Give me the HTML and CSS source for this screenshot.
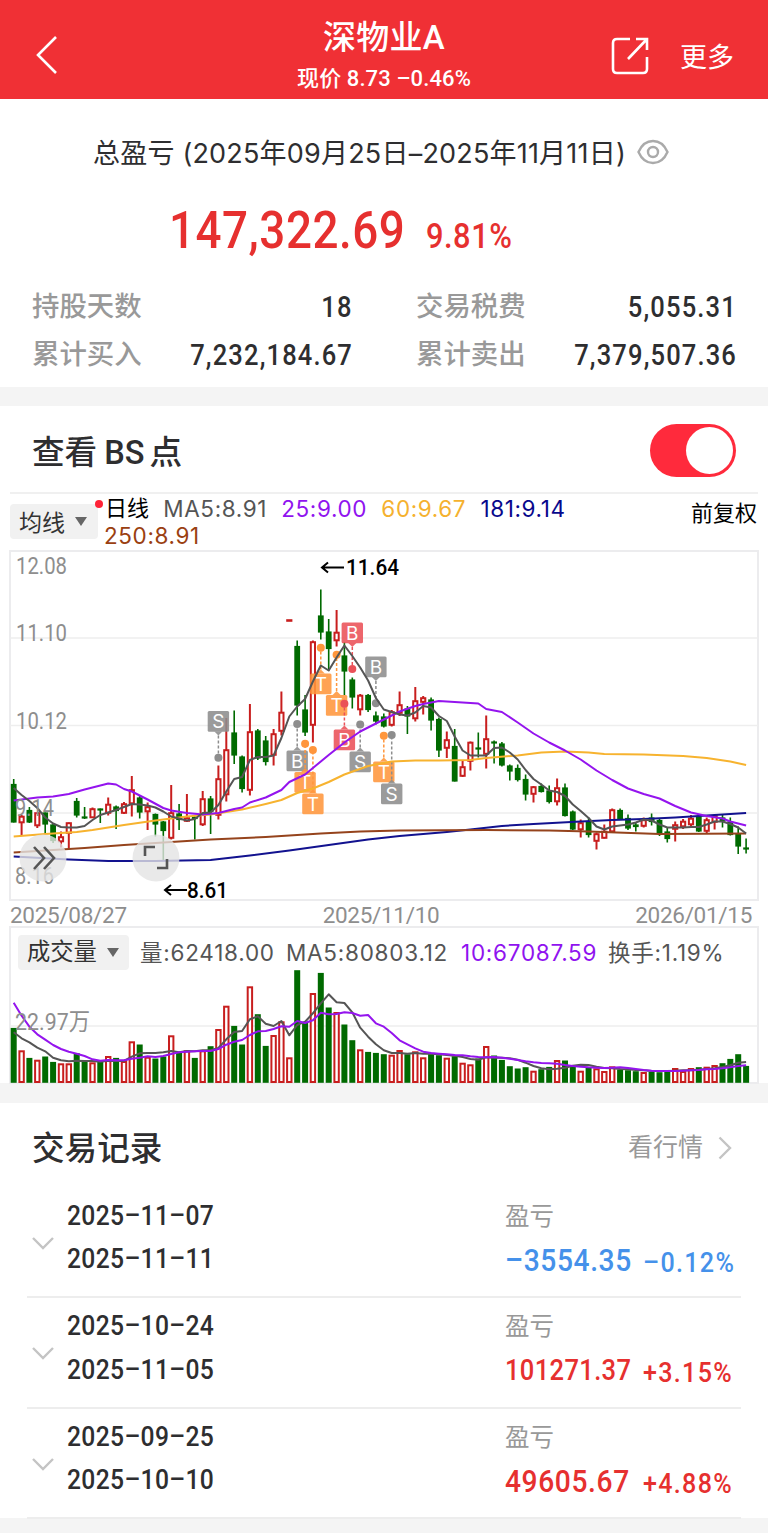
FILE: index.html
```html
<!DOCTYPE html>
<html lang="zh-CN">
<head>
  <meta charset="UTF-8" />
  <meta name="viewport" content="width=device-width, initial-scale=1" />
  <title>深物业A</title>
  <link rel="stylesheet" href="styles.css">
</head>
<body>

  <header class="topbar">
    <svg class="back" width="22" height="40" viewBox="0 0 22 40"><path d="M20 2 L2 20 L20 38" /></svg>
    <div class="topbar-title">
      <h1>深物业A</h1>
      <p>现价 8.73 –0.46%</p>
    </div>
    <div class="topbar-actions">
      <svg width="38" height="38" viewBox="0 0 38 38">
        <path d="M19 2 H6 Q2 2 2 6 V32 Q2 36 6 36 H32 Q36 36 36 32 V20" />
        <path d="M25 2 H36 V13 M36 2 L17 22" />
      </svg>
      <span>更多</span>
    </div>
  </header>

  <section class="summary">
    <div class="period">
      <span>总盈亏 (2025年09月25日–2025年11月11日)</span>
      <svg width="32" height="26" viewBox="0 0 32 26">
        <path d="M1.5 13 C5 5 10 2 16 2 S27 5 30.5 13 C27 21 22 24 16 24 S5 21 1.5 13 Z" />
        <circle cx="16" cy="13" r="5" />
      </svg>
    </div>
    <div class="total">
      <span class="total-amount">147,322.69</span>
      <span class="total-rate">9.81%</span>
    </div>
    <dl class="stats">
      <div><dt>持股天数</dt><dd>18</dd></div>
      <div><dt>交易税费</dt><dd>5,055.31</dd></div>
      <div><dt>累计买入</dt><dd>7,232,184.67</dd></div>
      <div><dt>累计卖出</dt><dd>7,379,507.36</dd></div>
    </dl>
  </section>

  <section class="chart-card">
    <div class="bs-row">
      <h2>查看<span>BS</span>点</h2>
      <div class="switch"></div>
    </div>

    <div class="legend">
      <div class="picker ma-picker">均线<i></i></div>
      <div class="legend-items">
        <b>日线</b>
        <span class="c-ma5">MA5:8.91</span>
        <span class="c-ma25">25:9.00</span>
        <span class="c-ma60">60:9.67</span>
        <span class="c-ma181">181:9.14</span>
        <span class="c-ma250">250:8.91</span>
      </div>
      <span class="adjust">前复权</span>
    </div>

    <svg id="kline" class="chart" width="768" height="351" viewBox="0 0 768 351"></svg>

    <div class="dates">
      <span>2025/08/27</span>
      <span>2025/11/10</span>
      <span>2026/01/15</span>
    </div>

    <div class="volume">
      <div class="volume-legend">
        <div class="picker">成交量<i></i></div>
        <span class="v1">量:62418.00</span>
        <span class="v2">MA5:80803.12</span>
        <span class="v3 c-ma25">10:67087.59</span>
        <span class="v4">换手:1.19%</span>
      </div>
      <svg id="volume" class="chart" width="768" height="157" viewBox="0 0 768 157"></svg>
    </div>
  </section>

  <section class="records">
    <div class="records-head">
      <h2>交易记录</h2>
      <div class="more">看行情
        <svg width="14" height="24" viewBox="0 0 14 24"><path d="M1.5 1.5 L12 12 L1.5 22.5" /></svg>
      </div>
    </div>
    <div class="record">
      <svg class="fold" width="22" height="13" viewBox="0 0 22 13"><path d="M1 1 L11 11 L21 1" /></svg>
      <div class="range">2025–11–07<br>2025–11–11</div>
      <div class="profit down">
        <label>盈亏</label>
        <div><strong>–3554.35</strong><em>–0.12%</em></div>
      </div>
    </div>
    <div class="record">
      <svg class="fold" width="22" height="13" viewBox="0 0 22 13"><path d="M1 1 L11 11 L21 1" /></svg>
      <div class="range">2025–10–24<br>2025–11–05</div>
      <div class="profit">
        <label>盈亏</label>
        <div><strong class="long">101271.37</strong><em>+3.15%</em></div>
      </div>
    </div>
    <div class="record">
      <svg class="fold" width="22" height="13" viewBox="0 0 22 13"><path d="M1 1 L11 11 L21 1" /></svg>
      <div class="range">2025–09–25<br>2025–10–10</div>
      <div class="profit">
        <label>盈亏</label>
        <div><strong>49605.67</strong><em>+4.88%</em></div>
      </div>
    </div>
  </section>

  <script src="chart.js"></script>
</body>
</html>
```
FILE: styles.css
```css
* {
  box-sizing: border-box;
}
body {
  margin: 0;
  width: 768px;
  height: 1533px;
  overflow: hidden;
  background: #f4f4f4;
  color: #2e2e30;
  font-family: Roboto, "Noto Sans CJK SC", sans-serif;
}
h1, h2, p, dl, dd {
  margin: 0;
  font-weight: 500;
}
svg {
  display: block;
  fill: none;
}

/* 1. Top bar */
.topbar {
  height: 99px;
  background: #f03035;
  color: #fff;
  display: grid;
  grid-template-columns: 200px 1fr 200px;
  padding: 0 34px 0 36px;
}
.topbar svg {
  stroke: #fff;
  stroke-width: 2.6;
}
.topbar .back {
  margin-top: 35px;
}
.topbar-title {
  text-align: center;
  padding-top: 16px;
  margin-left: -2px;
}
.topbar-title h1 {
  font-size: 33px;
  line-height: 44px;
  letter-spacing: 0.3px;
}
.topbar-title p {
  font-size: 22px;
  line-height: 37px;
  letter-spacing: 0.1px;
  white-space: nowrap;
}
.topbar-actions {
  display: flex;
  justify-content: flex-end;
  align-items: center;
  gap: 31px;
  padding-top: 12px;
  font-size: 27px;
}

/* 2. Summary */
.summary {
  height: 288px;
  background: #fff;
  padding: 31px 33px 0 32px;
}
.period {
  height: 44px;
  padding-left: 61px;
  display: flex;
  align-items: center;
  gap: 11px;
  font-family: Inter, "Noto Sans CJK SC", sans-serif;
  font-size: 27px;
  letter-spacing: 0.2px;
  line-height: 40px;
  white-space: nowrap;
}
.period span {
  margin-top: 3px;
}
.period svg {
  stroke: #aaa;
  stroke-width: 2.4;
}
.total {
  height: 110px;
  display: flex;
  align-items: baseline;
  padding: 27px 0 0 137px;
  color: #e6302f;
  font-weight: 500;
}
/* condensed figures */
.total-amount, .total-rate, .stats dd, .range, .profit strong, .profit em {
  transform: scaleX(0.88);
  transform-origin: left center;
}
.total-amount {
  width: 257px;
  font-size: 52px;
  line-height: 60px;
  letter-spacing: 0.6px;
}
.total-rate {
  font-size: 35px;
  letter-spacing: 0.6px;
}
.stats {
  display: grid;
  grid-template-columns: 320px 320px;
  grid-auto-rows: 47.5px;
  column-gap: 64px;
}
.stats div {
  display: flex;
  justify-content: space-between;
  line-height: 46px;
}
.stats dt {
  color: #999;
  font-size: 27.4px;
}
.stats dd {
  font-size: 29px;
  letter-spacing: 1.3px;
  margin-right: -1px;
  transform-origin: right center;
}

/* 3. Chart card */
.chart-card {
  height: 677px;
  margin-top: 19px;
  background: #fff;
}
.bs-row {
  height: 88px;
  margin: 0 10px;
  padding: 3px 22px 0;
  display: flex;
  align-items: center;
  justify-content: space-between;
  border-bottom: 2px solid #f0f0f0;
}
.bs-row h2, .records h2 {
  font-size: 32.6px;
}
.bs-row h2 {
  margin-top: -3px;
}
.bs-row h2 span {
  margin: 0 5px 0 7px;
}
.switch {
  width: 86px;
  height: 53px;
  border-radius: 27px;
  background: #ff2a3c;
  padding: 3px;
}
.switch::after {
  content: "";
  display: block;
  width: 47px;
  height: 47px;
  margin-left: auto;
  border-radius: 50%;
  background: #fff;
}
.legend {
  height: 56px;
  display: flex;
  padding-left: 10px;
  font-family: Inter, "Noto Sans CJK SC", sans-serif;
  font-size: 22.5px;
}
.picker {
  display: flex;
  align-items: center;
  gap: 10px;
  height: 35px;
  padding: 0 9px 1px;
  border-radius: 4px;
  background: #f1f1f1;
  color: #333;
  font-size: 23px;
  letter-spacing: 0;
}
.picker i {
  border: 6.5px solid transparent;
  border-top: 9px solid #666;
  border-bottom: 0;
}
.ma-picker {
  position: relative;
  width: 88px;
  margin-top: 10px;
}
.ma-picker::after {
  content: "";
  position: absolute;
  top: -4px;
  right: -5px;
  width: 8px;
  height: 8px;
  border-radius: 50%;
  background: #ff2337;
}
.legend-items {
  width: 593px;
  padding: 1px 0 0 7px;
  display: flex;
  flex-wrap: wrap;
  align-content: flex-start;
  column-gap: 14.3px;
  line-height: 27px;
  letter-spacing: 0.6px;
}
.legend-items .c-ma250 {
  width: 100%;
  margin-left: -1px;
}
.legend b, .adjust {
  color: #000;
  font-size: 22px;
  font-weight: 400;
  letter-spacing: 0;
}
.adjust {
  line-height: 38px;
}
.c-ma5 { color: #555; }
.c-ma25 { color: #9013ef; }
.c-ma60 { color: #f5b12e; }
.c-ma181 { color: #08088c; }
.c-ma250 { color: #9a4011; }
.dates {
  display: flex;
  justify-content: space-between;
  height: 25px;
  padding: 0 16px 0 10px;
  color: #8e8e8e;
  font-size: 22.5px;
  line-height: 29px;
  letter-spacing: -0.3px;
}
.volume {
  position: relative;
}
.volume-legend {
  position: absolute;
  top: 9px;
  left: 18px;
  display: flex;
  font-family: Inter, "Noto Sans CJK SC", sans-serif;
  font-size: 22.5px;
  line-height: 36px;
  letter-spacing: 0.75px;
  color: #555;
  white-space: nowrap;
}
.volume-legend .picker { width: 111px; font-size: 23.3px; }
.v1 { width: 146px; margin-left: 11px; }
.v2 { width: 175px; }
.v3 { width: 147px; }

/* chart marks */
.chart { overflow: visible; }
.box { stroke: #ececee; stroke-width: 2; }
.grid { stroke: #eee; stroke-width: 1.5; }
.axis { fill: #8e8e8e; font-size: 24px; }
.peak { fill: #000; font-size: 22.5px; font-weight: 500; }
.arrow { stroke: #000; stroke-width: 2; }
.line { stroke-width: 2; stroke-linejoin: round; }
.up { fill: #fff; stroke: #c81e1e; stroke-width: 2; }
.fall { fill: #006a00; stroke: #006a00; stroke-width: 1.6; }
.tag text {
  fill: #fff;
  font-family: Inter, sans-serif;
  font-size: 19px;
  text-anchor: middle;
}
.tag line { stroke-width: 1.5; stroke-dasharray: 3 2; }
.grey { fill: #8d8d8d; stroke: #8d8d8d; }
.orange { fill: #ff963c; stroke: #ff963c; }
.red { fill: #ea5158; stroke: #ea5158; }
.tag rect, .tag polygon { stroke: none; fill-opacity: 0.88; }
.tag circle, .tag text { stroke: none; }
.float circle { fill: #e4e4e4; fill-opacity: 0.8; }
.float path { stroke: #555; stroke-width: 2.6; }

/* 4. Records */
.records {
  height: 415px;
  margin-top: 20px;
  padding: 0 27px;
  background: #fff;
}
.records-head {
  height: 85px;
  padding: 2px 9px 0 5px;
  display: flex;
  align-items: center;
  justify-content: space-between;
}
.records-head h2 {
  margin-top: -2px;
}
.more {
  display: flex;
  align-items: center;
  gap: 15px;
  color: #999;
  font-size: 25px;
  line-height: 36px;
  margin-top: 2px;
}
.more svg, .fold {
  stroke: #c4c4c4;
  stroke-width: 2.4;
}
.record {
  display: grid;
  grid-template-columns: 35px 438px 236px;
  align-content: start;
  height: 110.3px;
  padding: 6px 0 0 5px;
  border-bottom: 2px solid #ededed;
}
.fold {
  margin-top: 43px;
}
.range {
  font-size: 28px;
  font-weight: 500;
  line-height: 43.4px;
  letter-spacing: 0.4px;
}
.profit {
  color: #e6302f;
  white-space: nowrap;
}
.profit.down {
  color: #4591ea;
}
.profit label {
  display: block;
  color: #999;
  font-size: 24.5px;
  line-height: 45px;
}
.profit div {
  display: flex;
  align-items: center;
  line-height: 39px;
}
.profit strong {
  flex: none;
  width: 138px;
  font-size: 32px;
  font-weight: 500;
  letter-spacing: 0.7px;
}
.profit .long {
  font-size: 29px;
  letter-spacing: 0.4px;
}
.profit em {
  font-style: normal;
  font-size: 28.5px;
  font-weight: 500;
  letter-spacing: 1.5px;
  padding-top: 4px;
}
```
FILE: chart.js
```js
const STEP = 7.875;
const X0 = 13.7;
const x = i => +(X0 + STEP * i).toFixed(1);

// g = falling, r = rising; high, body top, body bottom, low
const candles = `
g 229 234 272.5 272.5|r 265 266 273 285|g 257 260 272.5 273|r 262.5 262.5 276 278|g 262.5 262.5 274.5 284
g 274 274.5 291 293|r 281.5 286.5 292 297.5|r 272.5 272.5 283.5 298.5|g 248 251 265.5 267.5|g 257 266.5 268.5 269
r 257.5 258.5 268 268|g 258.5 258.5 260.5 273|r 247.5 254 263.5 265.5|g 255.5 256.5 261 279|r 252 253.5 263.5 264
r 226 239.5 254 266.5|g 245.5 247.5 262.5 268.5|r 252.5 256.5 262 280|g 263.5 264 274.5 286.5|g 271 271.5 281 310
r 235 262.5 288.5 289.5|g 254 263.5 270 280|r 244 267.5 271.5 272|g 266 267 269 289.5|r 241 248.5 275 276
g 246 248.5 262 284|r 215.5 228.5 265.5 269.5|r 168 199.5 245 251.5|g 160.5 182.5 205.5 214|g 205.5 206.5 239 242.5
r 154 181.5 240.5 245.5|g 179 180.5 208.5 210|g 186 190.5 212 215.5|r 179 183.5 205.5 215.5|r 141.5 162 181.5 185.5
r 70 69.5 70.5 70|g 90.5 96 155.5 165.5|g 145 159.5 182.5 186|r 90.5 91.5 175.5 192.5|g 39.5 65.5 82.5 89.5
g 69 81.5 99 120.5|r 60 82 91 96.5|g 92 105.5 121.5 145|g 127.5 129.5 147.5 158.5|r 144 145 160 165.5
g 144 145 160 162|g 161.5 165.5 171.5 174.5|g 163.5 166.5 176.5 177.5|r 160 161.5 175.5 176.5|r 141.5 154.5 163.5 166
g 156 158.5 166.5 184|r 137 150.5 169 171.5|r 146 147.5 152.5 164.5|g 147.5 149.5 170.5 180.5|g 167.5 169 200.5 207
r 181.5 189.5 198.5 208|g 179 196 231.5 231.5|r 210 216.5 226.5 227|r 191.5 192 211.5 220.5|g 182.5 197.5 199.5 207.5
r 165.5 188.5 204.5 218.5|g 190.5 191.5 193.5 213.5|g 192 193.5 215.5 216.5|g 214.5 215.5 221.5 230.5|g 214.5 218 230 231.5
g 224.5 229 244.5 250.5|r 236 236.5 244.5 252.5|g 233.5 236 242 242.5|g 235.5 240.5 252 253.5|r 228.5 237.5 252 255.5
g 233.5 237.5 266 266.5|g 260.5 261.5 279.5 280|r 269.5 272.5 280 287.5|g 267.5 272 285 287.5|r 282.5 283.5 291.5 299.5
r 274.5 281 288.5 288.5|r 258.5 259.5 282 282.5|g 258.5 260 269.5 270|g 264.5 268 278.5 280|g 272.5 274.5 277 281.5
r 267.5 269.5 276.5 277.5|g 263.5 267.5 272 275.5|g 268.5 270 284 286|g 277.5 281.5 289 292.5|r 271.5 274.5 279.5 291.5
r 269 271 277 279|r 265 268 275 276|g 265.5 266.5 281.5 282|r 267.5 269.5 281.5 284|r 264.5 265.5 272.5 279.5
g 264.5 267.5 271.5 277.5|g 267.5 271.5 285 285.5|g 276.5 283.5 296.5 304|g 288.5 297.5 299.5 303.5
`.trim().split(/[|\n]/).map(s => s.split(' ')).map(([t, ...v]) => [t, ...v.map(Number)]);

const ma5 = [238,245,251,258,267.5,273.5,277,277.5,277.5,276,270,265,262.5,260,257,254,254.5,255.5,257.5,261.5,266.5,268.5,270.5,269,263,262.5,255,241.5,229,227,210,207,207,205.5,188,166.5,156.5,149,131.5,115.5,120.5,107.5,95.5,106,117.5,130.5,148,159.5,162,164.5,165.5,162.5,156,157.5,166,171,186.5,200.5,205.5,205.5,205.5,198,197.5,202.5,209.5,220,229,234.5,240.5,242,246,254.5,261,268,276.5,279.5,276.5,275.5,274.5,272.5,269.5,270.5,274.5,277.5,277.5,277.5,277,277,274.5,271.5,271.5,274,277.5,283.5];

// sparse lines: [index, y]
const ma25 = [[0,250.5],[1,249.5],[3,247.5],[5,246.5],[7,244],[9,239.5],[12,233.5],[13,234.5],[14,239],[15,241.5],[17,249.5],[19,258],[20,260.5],[22,263],[24,264.5],[26,263],[28,259],[29,257.5],[30,252.5],[32,247.5],[34,240],[35,232],[37,224.5],[38,218],[40,205],[42,192.5],[44,181.5],[46,173.5],[48,165.5],[49,161.5],[51,156],[52,154],[54,151],[57,152.5],[59,153.5],[60,159],[62,162],[64,172.5],[66,183.5],[68,192.5],[70,200.5],[72,209.5],[74,220.5],[76,230],[78,238.5],[80,244],[82,248.5],[84,256],[86,262.5],[88,266],[90,268.5],[91,271.5],[93,275.5]];
const ma60 = [[0,286.5],[4,284],[8,282],[10,280],[14,275],[18,270.5],[22,266.5],[25,264.5],[29,259.5],[32,254],[34,250],[36,243],[38,238.5],[40,232],[42,224.5],[45,216],[48,211.5],[51,210.5],[54,210.5],[58,210],[60,208],[64,205.5],[67,202.5],[70,201.5],[73,202.5],[75,204],[80,204.5],[85,206],[88,208],[91,211.5],[93,215]];
const ma181 = [[0,306.5],[7,309.5],[12,311],[18,311],[25,310],[30,305.5],[35,300.5],[40,295],[45,289.5],[49,286],[55,282],[58,279.5],[62,276],[66,274],[72,271.5],[76,270],[80,269],[84,267.5],[88,265.5],[93,263]];
const ma250 = [[0,302.5],[5,300],[9,298],[14,295],[20,292],[25,289.5],[32,287],[39,283.5],[44,281.5],[49,280.5],[60,280],[68,280.5],[73,281.5],[82,284],[93,283.5]];

// trade tags: letter, colour, candle index, top of box, dot y
const tags = [
  ['S', 'grey', 26, 161, 207.7], ['B', 'grey', 36, 200.5, 174],
  ['T', 'orange', 37, 222, 193.7], ['T', 'orange', 38, 243.5, 200],
  ['T', 'orange', 39, 123.5, 97.7], ['T', 'orange', 41, 145, 104.7],
  ['B', 'red', 43, 72.5, 119], ['B', 'red', 42, 179.5, 153.7],
  ['S', 'grey', 44, 201.5, 174.5], ['B', 'grey', 46, 106.5, 153.3],
  ['T', 'orange', 47, 211.5, 185.7], ['S', 'grey', 48, 233.5, 185]
];

const line = (pts, color) =>
  `<polyline class="line" style="stroke:${color}" points="${pts.map(p => x(p[0]) + ',' + p[1]).join(' ')}"/>`;

const frame = (h, rows) => `<rect class="box" x="10" y="1" width="748" height="${h}"/>` +
  rows.map(y => `<line class="grid" x1="10" x2="758" y1="${y}" y2="${y}"/>`).join('');

const label = (cls, s, y, left, w) =>
  `<text class="${cls}" x="${left}" y="${y}" textLength="${w}" lengthAdjust="spacingAndGlyphs">${s}</text>`;

function candle([type, hi, top, bottom, lo], i) {
  const cls = type === 'r' ? 'up' : 'fall';
  const cx = x(i);
  return `<line class="${cls}" x1="${cx}" x2="${cx}" y1="${hi}" y2="${lo}"/>` +
    `<rect class="${cls}" x="${cx - 2.1}" y="${top + 0.7}" width="4.2" height="${Math.max(bottom - top - 1.4, 0.6)}"/>`;
}

function tag([letter, color, i, top, dot]) {
  const cx = x(i);
  const down = dot > top;
  const edge = down ? top + 20.5 : top;
  const tip = down ? edge + 4 : edge - 4;
  return `<g class="tag ${color}"><line x1="${cx}" x2="${cx}" y1="${tip}" y2="${dot}"/>
    <circle cx="${cx}" cy="${dot}" r="4"/>
    <rect x="${cx - 10.7}" y="${top}" width="21.4" height="20.8" rx="1.5"/>
    <polygon points="${cx - 4},${edge} ${cx + 4},${edge} ${cx},${tip}"/>
    <text x="${cx}" y="${top + 17.3}">${letter}</text></g>`;
}

document.getElementById('kline').innerHTML =
  frame(349, [88, 175.5, 263]) +
  candles.map(candle).join('') +
  line(ma181, '#12128f') + line(ma250, '#95431c') +
  tags.map(tag).join('') +
  line(ma60, '#f7b32f') + line(ma25, '#9414ee') +
  line(ma5.map((y, i) => [i, y]), '#555') +
  label('axis', '12.08', 23.5, 16, 51) + label('axis', '11.10', 91, 16, 51) + label('axis', '10.12', 178.5, 16, 51) +
  label('axis', '9.14', 266, 15, 39) + label('axis', '8.16', 334, 15, 39) +
  `<path class="arrow" d="M328 12.5 L322 17.5 L328 22.5 M322 17.5 H344"/>
   <path class="arrow" d="M171 335 L165 340 L171 345 M165 340 H187"/>` +
  label('peak', '11.64', 25, 346, 53) + label('peak', '8.61', 347.5, 187, 41) +
  `<g class="float"><circle cx="43" cy="308" r="23.5"/><circle cx="156" cy="308" r="23.5"/>
   <path d="M34 297 L44 308 L34 319 M44 297 L54 308 L44 319"/>
   <path d="M145 306 V297 H155 M167 309 V318 H157"/></g>`;

// volume: type + distance of the bar top from the chart top, in thirds of a pixel
const volumes = 'g308 r376 g398 r404 g394 g410 r415 r415 g384 g408 r412 g408 r393 g398 r408 r349 g358 r395 g400 g394 r331 g382 r376 g398 r376 g363 r312 r242 g302 g358 r184 g267 g362 r330 r289 r397 g135 g293 r204 g143 g247 r261 g298 g345 r373 g380 g383 g387 r389 r375 g387 r379 r397 g387 g390 r398 g393 r413 r418 g400 r363 g391 g404 g423 g430 g426 r437 g432 g425 r405 g406 g423 r437 g428 r430 r438 r424 g433 g435 g438 r441 g440 g441 g438 r429 r438 r429 g426 r425 r420 g414 g401 g387 g422'.split(' ');
const vma5 = [322,340,352,368,379,398,406,409,407,408,408,410,407,408,408,395,385,384,384,382,378,382,378,379,376,376,369,343,321,318,283,274,296,303,288,331,300,290,265,235,208,232,234,262,308,335,358,376,384,384,386,384,386,386,388,390,392,396,402,404,397,398,398,400,404,413,423,430,433,431,428,422,419,420,425,429,430,432,433,435,436,438,438,438,437,436,436,434,432,430,426,421,413,411];
const vma10 = [233,272,305,328,344,360,372,380,386,393,403,407,405,406,406,401,398,394,396,393,387,382,380,379,378,378,372,359,350,345,330,319,318,312,304,305,288,294,286,263,268,267,262,264,272,270,295,305,324,346,358,370,380,384,386,388,390,391,394,396,397,396,398,401,405,409,412,414,415,416,420,423,425,427,428,429,428,427,429,432,435,437,438,438,438,437,436,435,433,432,430,427,423,421];
const vy = v => +(v / 3 - 1).toFixed(1);

document.getElementById('volume').innerHTML =
  frame(156, [100]) +
  volumes.map((s, i) => {
    const top = vy(s.slice(1)) + 1;
    return `<rect class="${s[0] === 'r' ? 'up' : 'fall'}" x="${x(i) - 2.2}" y="${top}" width="4.4" height="${156 - top}"/>`;
  }).join('') +
  line(vma5.map((v, i) => [i, vy(v)]), '#555') +
  line(vma10.map((v, i) => [i, vy(v)]), '#9414ee') +
  label('axis', '22.97万', 104, 15, 75);
```
